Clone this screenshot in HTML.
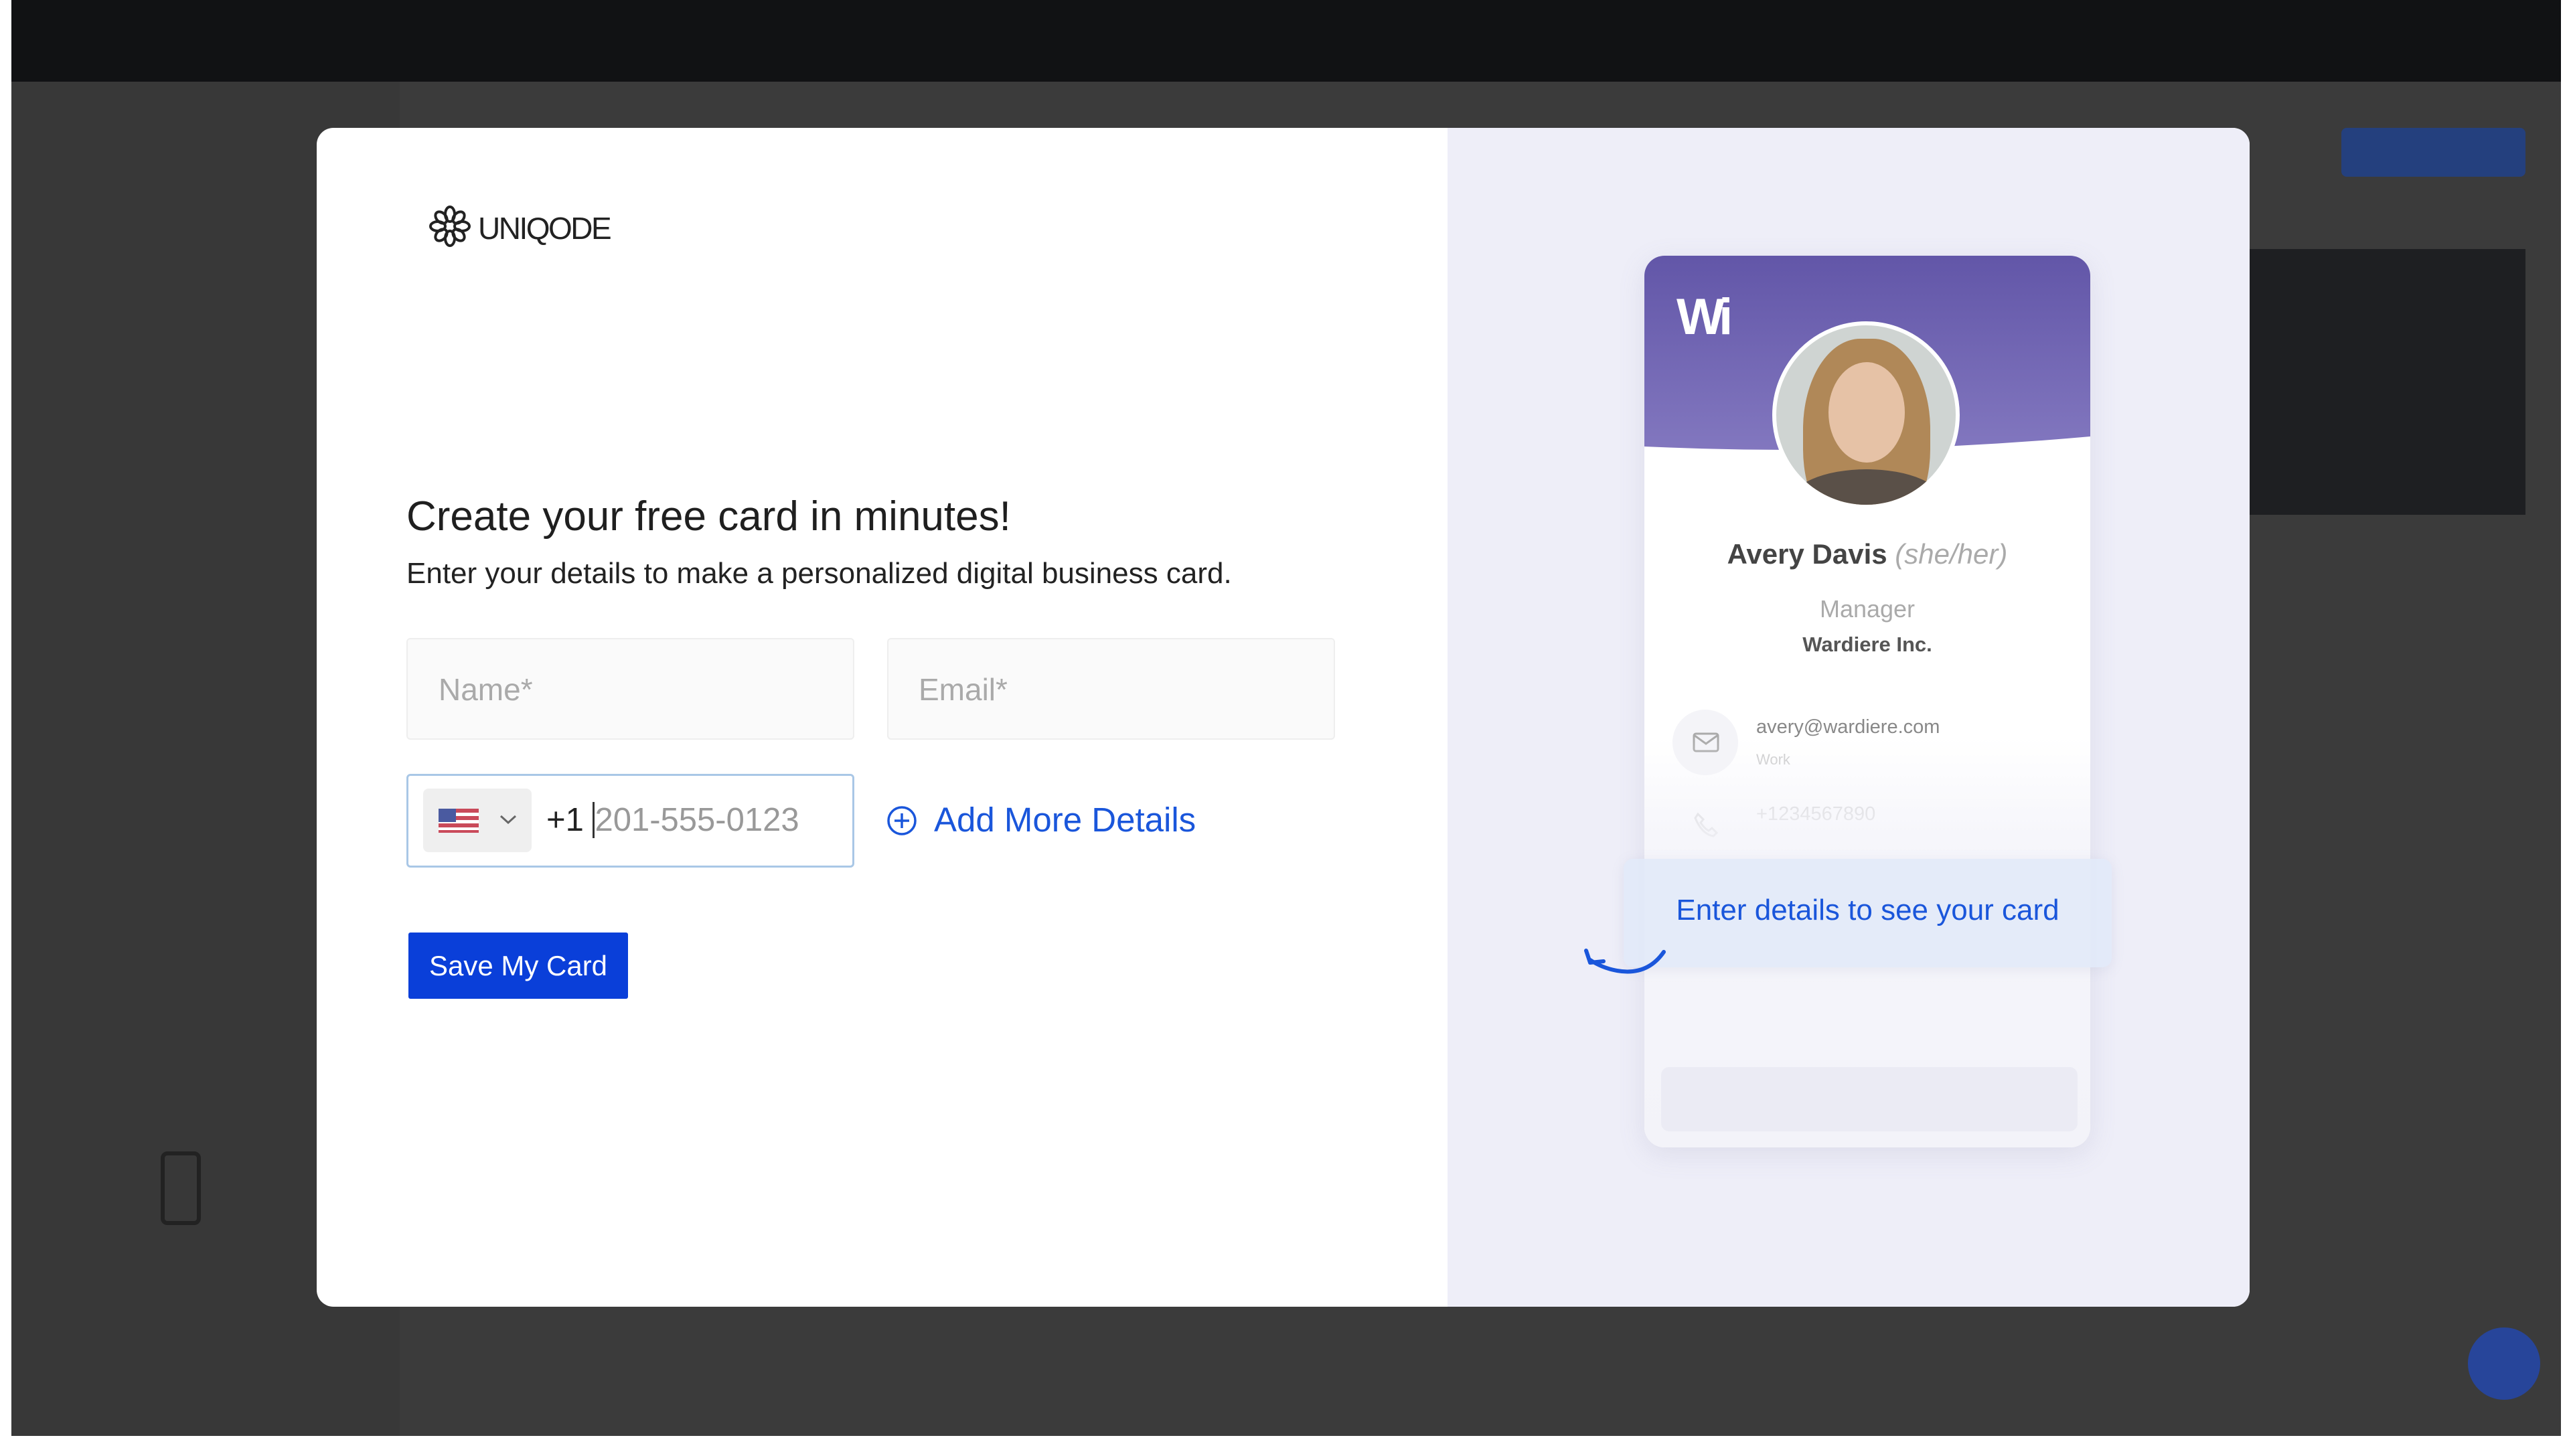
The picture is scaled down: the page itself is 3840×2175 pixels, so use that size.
<!DOCTYPE html>
<html><head><meta charset="utf-8"><style>
*{margin:0;padding:0;box-sizing:border-box}
body{width:3840px;height:2175px;background:#fff;position:relative;overflow:hidden;font-family:"Liberation Sans",sans-serif}
.a{position:absolute}
</style></head><body>
<div class="a" style="left:17px;top:0;width:3808px;height:2145px;background:#3b3b3b"></div>
<div class="a" style="left:17px;top:0;width:3808px;height:122px;background:#111214"></div>
<div class="a" style="left:17px;top:122px;width:580px;height:2023px;background:#383838"></div>
<div class="a" style="left:3360px;top:372px;width:412px;height:397px;background:#1e1f22"></div>
<div class="a" style="left:3497px;top:191px;width:275px;height:73px;background:#24407e;border-radius:8px"></div>
<div class="a" style="left:3686px;top:1983px;width:108px;height:108px;background:#27459a;border-radius:50%"></div>
<div class="a" style="left:240px;top:1720px;width:60px;height:110px;border:6px solid #222;border-radius:10px"></div>

<div class="a" style="left:473px;top:191px;width:2887px;height:1761px;background:#fff;border-radius:25px;overflow:hidden">
  <div class="a" style="left:1689px;top:0;width:1198px;height:1761px;background:#eeeef8"></div>
</div>

<svg class="a" style="left:640px;top:306px" width="64" height="64" viewBox="0 0 64 64" fill="none" stroke="#222" stroke-width="4">
<ellipse cx="32" cy="14" rx="7" ry="11"/><ellipse cx="32" cy="50" rx="7" ry="11"/><ellipse cx="14" cy="32" rx="11" ry="7"/><ellipse cx="50" cy="32" rx="11" ry="7"/>
<ellipse cx="19" cy="19" rx="7" ry="10" transform="rotate(-45 19 19)"/><ellipse cx="45" cy="45" rx="7" ry="10" transform="rotate(-45 45 45)"/><ellipse cx="45" cy="19" rx="7" ry="10" transform="rotate(45 45 19)"/><ellipse cx="19" cy="45" rx="7" ry="10" transform="rotate(45 19 45)"/></svg>
<div class="a" style="left:714px;top:314px;font-size:46px;color:#222;letter-spacing:-2.5px">UNIQODE</div>

<div class="a" style="left:607px;top:736px;font-size:62px;color:#1f1f1f">Create your free card in minutes!</div>
<div class="a" style="left:607px;top:832px;font-size:44px;color:#222">Enter your details to make a personalized digital business card.</div>

<div class="a" style="left:607px;top:953px;width:669px;height:152px;background:#fafafa;border:2px solid #eee;border-radius:6px"></div>
<div class="a" style="left:655px;top:1003px;font-size:46px;color:#aaa">Name*</div>
<div class="a" style="left:1325px;top:953px;width:669px;height:152px;background:#fafafa;border:2px solid #eee;border-radius:6px"></div>
<div class="a" style="left:1372px;top:1003px;font-size:46px;color:#aaa">Email*</div>

<div class="a" style="left:607px;top:1156px;width:669px;height:140px;background:#fff;border:3px solid #a9c7e6;border-radius:6px"></div>
<div class="a" style="left:632px;top:1178px;width:162px;height:95px;background:#efefef;border-radius:8px"></div>
<svg class="a" style="left:655px;top:1208px" width="60" height="36" viewBox="0 0 60 36"><rect width="60" height="36" fill="#c94a5a"/><rect y="6" width="60" height="5" fill="#fff"/><rect y="17" width="60" height="5" fill="#fff"/><rect y="28" width="60" height="4" fill="#fff"/><rect width="26" height="20" fill="#4a5aa0"/></svg>
<svg class="a" style="left:744px;top:1214px" width="30" height="20" viewBox="0 0 30 20"><path d="M4 5 L15 15 L26 5" stroke="#666" stroke-width="3" fill="none"/></svg>
<div class="a" style="left:816px;top:1197px;font-size:49px;color:#222">+1 <span style="border-left:3px solid #333;color:#999">201-555-0123</span></div>

<svg class="a" style="left:1323px;top:1202px" width="48" height="48" viewBox="0 0 48 48" fill="none" stroke="#1a56db" stroke-width="3.5"><circle cx="24" cy="24" r="20"/><path d="M24 13v22M13 24h22"/></svg>
<div class="a" style="left:1395px;top:1195px;font-size:51px;color:#1a56db">Add More Details</div>

<div class="a" style="left:610px;top:1393px;width:328px;height:99px;background:#0a3fd9;border-radius:3px;color:#fff;font-size:42px;line-height:99px;text-align:center">Save My Card</div>

<div class="a" style="left:2456px;top:382px;width:666px;height:1332px;background:#fff;border-radius:30px;overflow:hidden;box-shadow:0 10px 40px rgba(120,120,160,.15)">
  <svg class="a" style="left:0;top:0" width="666" height="330" viewBox="0 0 666 330"><defs><linearGradient id="g" x1="0" y1="0" x2="0" y2="1"><stop offset="0" stop-color="#6256a8"/><stop offset="1" stop-color="#8277bf"/></linearGradient></defs><path d="M0 0H666V270Q333 300 0 285Z" fill="url(#g)"/></svg>
  <div class="a" style="left:48px;top:48px;font-size:76px;font-weight:bold;color:#fff;letter-spacing:-8px">Wi</div>
  <div class="a" style="left:191px;top:98px;width:280px;height:280px;border-radius:50%;border:6px solid #fff;overflow:hidden;background:#cfd4d2">
    <div class="a" style="left:40px;top:20px;width:190px;height:300px;border-radius:45%;background:#b08858"></div>
    <div class="a" style="left:78px;top:55px;width:114px;height:150px;border-radius:50%;background:#e6c2a6"></div>
    <div class="a" style="left:20px;top:215px;width:230px;height:100px;border-radius:50%;background:#5a5048"></div>
  </div>
  <div class="a" style="left:0;width:666px;top:422px;text-align:center;font-size:42px;color:#444;font-weight:bold">Avery Davis <span style="font-weight:normal;font-style:italic;color:#aaa">(she/her)</span></div>
  <div class="a" style="left:0;width:666px;top:507px;text-align:center;font-size:36px;color:#aaa">Manager</div>
  <div class="a" style="left:0;width:666px;top:563px;text-align:center;font-size:31px;color:#555;font-weight:bold">Wardiere Inc.</div>
  <div class="a" style="left:42px;top:678px;width:98px;height:98px;border-radius:50%;background:#f4f4f8"></div>
  <svg class="a" style="left:72px;top:712px" width="40" height="30" viewBox="0 0 40 30" fill="none" stroke="#aaa" stroke-width="3"><rect x="2" y="2" width="36" height="26" rx="3"/><path d="M2 4 L20 17 L38 4"/></svg>
  <div class="a" style="left:167px;top:688px;font-size:29px;color:#888">avery@wardiere.com</div>
  <div class="a" style="left:167px;top:740px;font-size:22px;color:#ccc">Work</div>
  <svg class="a" style="left:72px;top:830px" width="40" height="40" viewBox="0 0 40 40" fill="none" stroke="#ccc" stroke-width="3"><path d="M8 4 L16 12 L12 17 Q18 26 24 29 L29 25 L36 32 L31 37 Q14 34 4 10Z"/></svg>
  <div class="a" style="left:167px;top:818px;font-size:29px;color:#ccc">+1234567890</div>
  <div class="a" style="left:0;top:720px;width:666px;height:612px;background:linear-gradient(rgba(255,255,255,0),rgba(244,244,250,.85) 25%,#f3f3f9)"></div>
  <div class="a" style="left:25px;top:1212px;width:622px;height:96px;background:#ebebf4;border-radius:12px"></div>
</div>
<div class="a" style="left:2425px;top:1283px;width:729px;height:162px;background:rgba(226,233,248,.92);border-radius:14px;box-shadow:0 4px 20px rgba(120,130,170,.12)"></div>
<div class="a" style="left:2425px;top:1335px;width:729px;text-align:center;font-size:44px;color:#1a56db">Enter details to see your card</div>
<svg class="a" style="left:2355px;top:1400px" width="140" height="70" viewBox="0 0 140 70" fill="none" stroke="#1a56db" stroke-width="6" stroke-linecap="round" stroke-linejoin="round"><path d="M130 22 Q105 58 60 50 Q38 46 20 34"/><path d="M14 20 L20 38 L40 36"/></svg>
</body></html>
